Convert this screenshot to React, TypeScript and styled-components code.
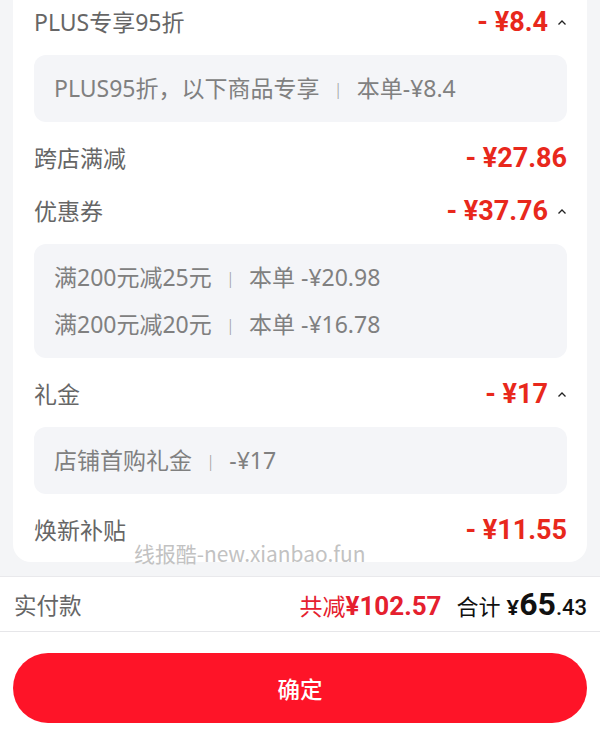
import React from "react";
import styled, { createGlobalStyle } from "styled-components";

const GlobalStyle = createGlobalStyle`
  body {
    margin: 0;
    background: #f4f5f7;
    font-family: "Noto Sans", "Noto Sans CJK SC", sans-serif;
  }
  #root {
    min-height: 749px;
  }
`;

const Page = styled.div`
  width: 600px;
  min-height: 749px;
  display: flex;
  flex-direction: column;
  background: #f4f5f7;
`;

const CardWrap = styled.div`
  position: relative;
  padding: 0 13px;
`;

const Card = styled.div`
  background: #ffffff;
  border-radius: 0 0 18px 18px;
  padding: 0 20px 10px 21px;
`;

const Section = styled.div<{ $after: number }>`
  display: flex;
  flex-direction: column;
  margin-bottom: ${(p) => p.$after}px;
  &:last-child {
    margin-bottom: 0;
  }
`;

const Row = styled.div`
  height: 44px;
  display: flex;
  align-items: center;
  justify-content: space-between;
`;

const Title = styled.span`
  font-size: 23px;
  line-height: 1;
  color: #666666;
`;

const Amount = styled.span`
  display: flex;
  align-items: center;
  gap: 9px;
  font-family: "Roboto", "Noto Sans CJK SC", sans-serif;
  font-weight: 700;
  font-size: 27px;
  color: #e8281c;
`;

const Detail = styled.div`
  margin-top: 11px;
  background: #f4f5f8;
  border-radius: 12px;
  padding: 10px 20px;
`;

const DetailLine = styled.div`
  height: 47px;
  display: flex;
  align-items: center;
  font-size: 23px;
  line-height: 1;
  color: #808080;
`;

const Bar = styled.span`
  margin: 0 14px;
  color: #a0a0a0;
  font-size: 17px;
  font-weight: 300;
`;

const Watermark = styled.div`
  position: absolute;
  left: 134px;
  bottom: -6px;
  font-family: "Noto Sans CJK SC", "Noto Sans", sans-serif;
  font-size: 20.9px;
  color: #c2c2c2;
`;

const Footer = styled.div`
  margin-top: 14px;
  height: 54px;
  background: #ffffff;
  border-top: 1px solid #e9e9ec;
  border-bottom: 1px solid #e6e6e9;
  display: flex;
  align-items: center;
  justify-content: space-between;
  padding: 0 13px 0 14px;
`;

const PayLabel = styled.span`
  font-size: 22.5px;
  color: #666666;
`;

const Totals = styled.div`
  display: flex;
  align-items: baseline;
`;

const Saved = styled.span`
  font-size: 23px;
  color: #e5202e;
  margin-right: 15px;
`;

const SavedNum = styled.span`
  font-family: "Roboto", "Noto Sans CJK SC", sans-serif;
  font-weight: 700;
  font-size: 26px;
`;

const Sum = styled.span`
  font-size: 22px;
  color: #111111;
`;

const SumYuan = styled.span`
  margin-left: 6px;
  font-weight: 700;
  font-size: 22px;
`;

const SumInt = styled.span`
  font-family: "Roboto", sans-serif;
  font-weight: 700;
  font-size: 32px;
`;

const SumDec = styled.span`
  font-family: "Roboto", sans-serif;
  font-weight: 500;
  font-size: 22px;
`;

const ButtonArea = styled.div`
  flex: 1;
  background: #ffffff;
  padding: 21px 13px 28px;
`;

const Confirm = styled.button`
  width: 100%;
  height: 70px;
  border: none;
  border-radius: 35px;
  background: #fe1428;
  color: #ffffff;
  font-family: "Noto Sans CJK SC", sans-serif;
  font-size: 22.5px;
  font-weight: 500;
`;

const Caret = () => (
  <svg width="10" height="7" viewBox="0 0 10 7">
    <path d="M1.5 5.5 L5 2 L8.5 5.5" fill="none" stroke="#222" strokeWidth="1.3" />
  </svg>
);

type Item = {
  title: string;
  amount: string;
  open?: boolean;
  lines?: [string, string][];
};

const items: Item[] = [
  {
    title: "PLUS专享95折",
    amount: "- ¥8.4",
    open: true,
    lines: [["PLUS95折，以下商品专享", "本单-¥8.4"]],
  },
  { title: "跨店满减", amount: "- ¥27.86" },
  {
    title: "优惠券",
    amount: "- ¥37.76",
    open: true,
    lines: [
      ["满200元减25元", "本单 -¥20.98"],
      ["满200元减20元", "本单 -¥16.78"],
    ],
  },
  {
    title: "礼金",
    amount: "- ¥17",
    open: true,
    lines: [["店铺首购礼金", "-¥17"]],
  },
  { title: "焕新补贴", amount: "- ¥11.55" },
];

export default function App() {
  return (
    <Page>
      <GlobalStyle />
      <CardWrap>
        <Card>
          {items.map((item) => (
            <Section key={item.title} $after={item.lines ? 14 : 9}>
              <Row>
                <Title>{item.title}</Title>
                <Amount>
                  {item.amount}
                  {item.open && <Caret />}
                </Amount>
              </Row>
              {item.lines && (
                <Detail>
                  {item.lines.map(([a, b]) => (
                    <DetailLine key={a}>
                      {a}
                      <Bar>|</Bar>
                      {b}
                    </DetailLine>
                  ))}
                </Detail>
              )}
            </Section>
          ))}
        </Card>
        <Watermark>线报酷-new.xianbao.fun</Watermark>
      </CardWrap>
      <Footer>
        <PayLabel>实付款</PayLabel>
        <Totals>
          <Saved>
            共减<SavedNum>¥102.57</SavedNum>
          </Saved>
          <Sum>
            合计
            <SumYuan>¥</SumYuan>
            <SumInt>65</SumInt>
            <SumDec>.43</SumDec>
          </Sum>
        </Totals>
      </Footer>
      <ButtonArea>
        <Confirm>确定</Confirm>
      </ButtonArea>
    </Page>
  );
}
